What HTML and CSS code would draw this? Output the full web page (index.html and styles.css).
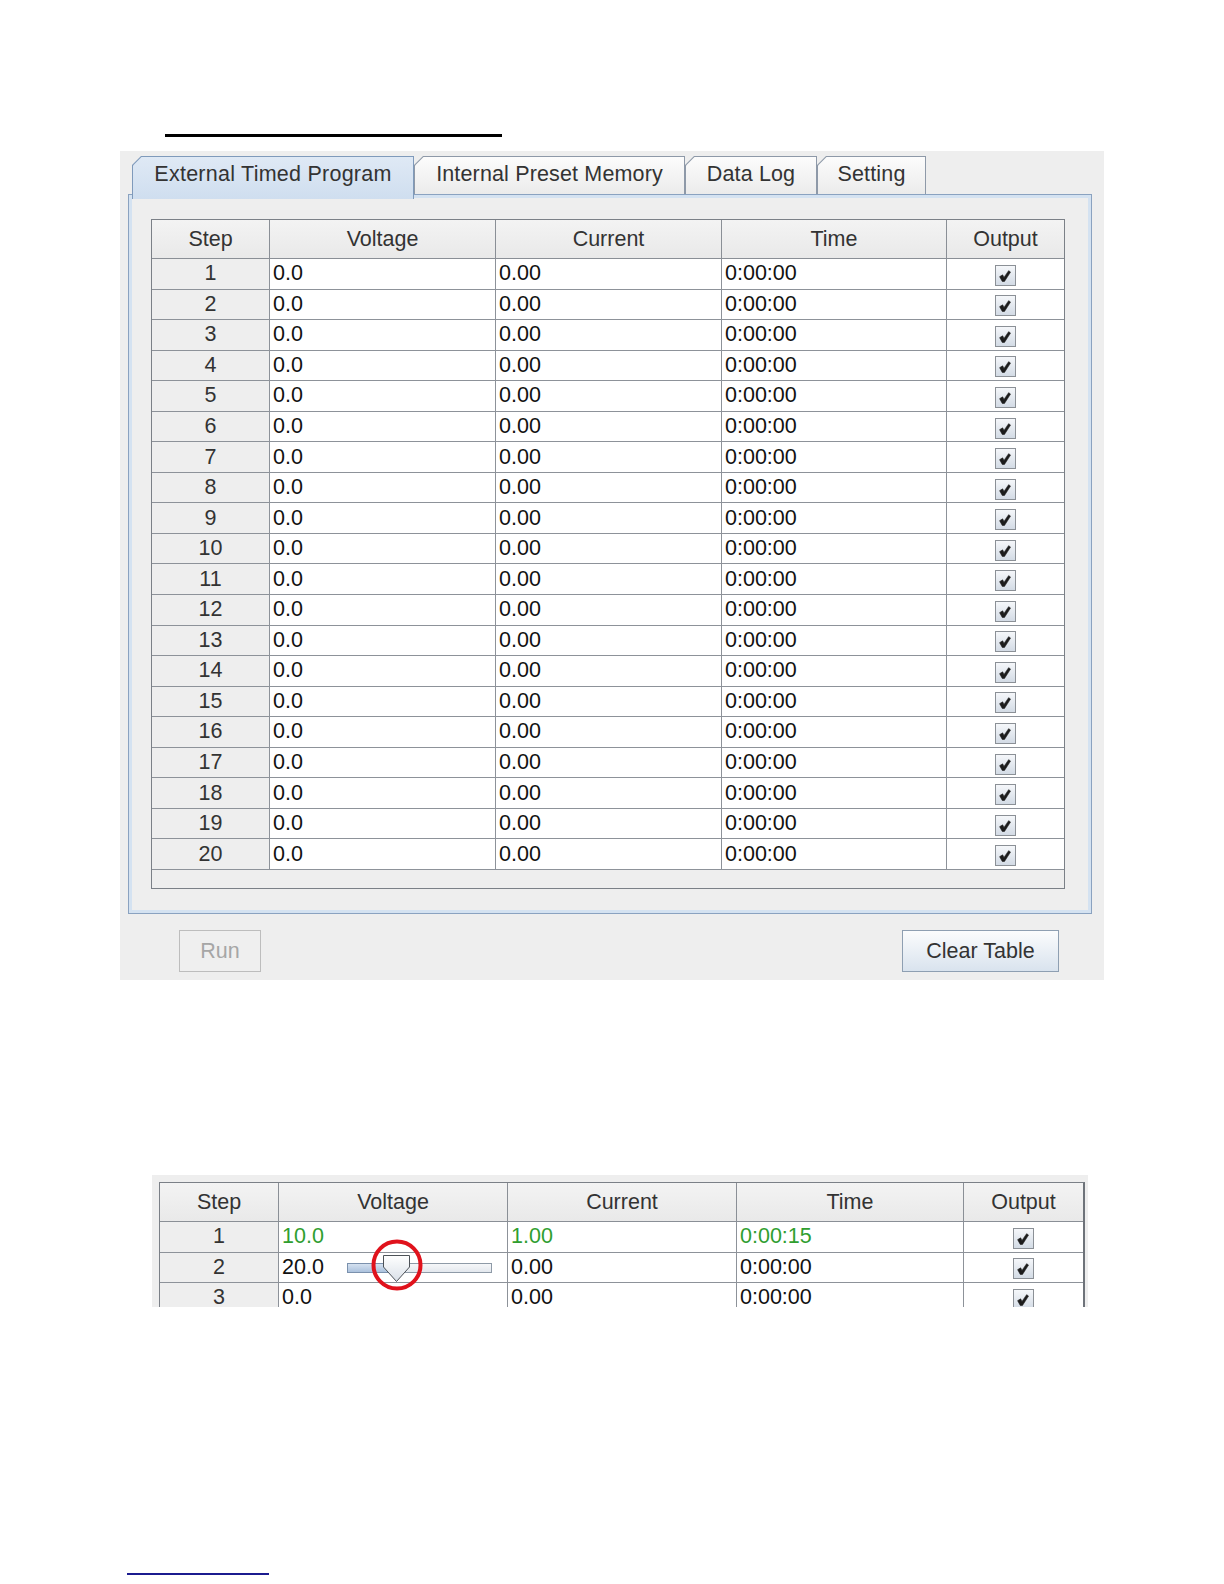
FILE: index.html
```html
<!DOCTYPE html>
<html>
<head>
<meta charset="utf-8">
<link rel="stylesheet" href="styles.css">
</head>
<body>
<div class="rule-top"></div>

<div class="window">
  <div class="tabs">
    <div class="tab sel t1"><div class="tab-in">External Timed Program</div></div>
    <div class="tab t2"><div class="tab-in">Internal Preset Memory</div></div>
    <div class="tab t3"><div class="tab-in">Data Log</div></div>
    <div class="tab t4"><div class="tab-in">Setting</div></div>
  </div>
  <div class="content">
    <div class="table">
      <div class="grid">
        <div class="hd">Step</div><div class="hd">Voltage</div><div class="hd">Current</div><div class="hd">Time</div><div class="hd last">Output</div>
        <div class="c s">1</div><div class="c">0.0</div><div class="c">0.00</div><div class="c">0:00:00</div><div class="c o"><span class="cb"><svg viewBox="0 0 20 20"><path d="M3.8 11.2L7 9.3L8.4 12L13.3 4.9L15.3 6.4L8.9 16.3L6.6 16.3Z"/></svg></span></div>
        <div class="c s">2</div><div class="c">0.0</div><div class="c">0.00</div><div class="c">0:00:00</div><div class="c o"><span class="cb"><svg viewBox="0 0 20 20"><path d="M3.8 11.2L7 9.3L8.4 12L13.3 4.9L15.3 6.4L8.9 16.3L6.6 16.3Z"/></svg></span></div>
        <div class="c s">3</div><div class="c">0.0</div><div class="c">0.00</div><div class="c">0:00:00</div><div class="c o"><span class="cb"><svg viewBox="0 0 20 20"><path d="M3.8 11.2L7 9.3L8.4 12L13.3 4.9L15.3 6.4L8.9 16.3L6.6 16.3Z"/></svg></span></div>
        <div class="c s">4</div><div class="c">0.0</div><div class="c">0.00</div><div class="c">0:00:00</div><div class="c o"><span class="cb"><svg viewBox="0 0 20 20"><path d="M3.8 11.2L7 9.3L8.4 12L13.3 4.9L15.3 6.4L8.9 16.3L6.6 16.3Z"/></svg></span></div>
        <div class="c s">5</div><div class="c">0.0</div><div class="c">0.00</div><div class="c">0:00:00</div><div class="c o"><span class="cb"><svg viewBox="0 0 20 20"><path d="M3.8 11.2L7 9.3L8.4 12L13.3 4.9L15.3 6.4L8.9 16.3L6.6 16.3Z"/></svg></span></div>
        <div class="c s">6</div><div class="c">0.0</div><div class="c">0.00</div><div class="c">0:00:00</div><div class="c o"><span class="cb"><svg viewBox="0 0 20 20"><path d="M3.8 11.2L7 9.3L8.4 12L13.3 4.9L15.3 6.4L8.9 16.3L6.6 16.3Z"/></svg></span></div>
        <div class="c s">7</div><div class="c">0.0</div><div class="c">0.00</div><div class="c">0:00:00</div><div class="c o"><span class="cb"><svg viewBox="0 0 20 20"><path d="M3.8 11.2L7 9.3L8.4 12L13.3 4.9L15.3 6.4L8.9 16.3L6.6 16.3Z"/></svg></span></div>
        <div class="c s">8</div><div class="c">0.0</div><div class="c">0.00</div><div class="c">0:00:00</div><div class="c o"><span class="cb"><svg viewBox="0 0 20 20"><path d="M3.8 11.2L7 9.3L8.4 12L13.3 4.9L15.3 6.4L8.9 16.3L6.6 16.3Z"/></svg></span></div>
        <div class="c s">9</div><div class="c">0.0</div><div class="c">0.00</div><div class="c">0:00:00</div><div class="c o"><span class="cb"><svg viewBox="0 0 20 20"><path d="M3.8 11.2L7 9.3L8.4 12L13.3 4.9L15.3 6.4L8.9 16.3L6.6 16.3Z"/></svg></span></div>
        <div class="c s">10</div><div class="c">0.0</div><div class="c">0.00</div><div class="c">0:00:00</div><div class="c o"><span class="cb"><svg viewBox="0 0 20 20"><path d="M3.8 11.2L7 9.3L8.4 12L13.3 4.9L15.3 6.4L8.9 16.3L6.6 16.3Z"/></svg></span></div>
        <div class="c s">11</div><div class="c">0.0</div><div class="c">0.00</div><div class="c">0:00:00</div><div class="c o"><span class="cb"><svg viewBox="0 0 20 20"><path d="M3.8 11.2L7 9.3L8.4 12L13.3 4.9L15.3 6.4L8.9 16.3L6.6 16.3Z"/></svg></span></div>
        <div class="c s">12</div><div class="c">0.0</div><div class="c">0.00</div><div class="c">0:00:00</div><div class="c o"><span class="cb"><svg viewBox="0 0 20 20"><path d="M3.8 11.2L7 9.3L8.4 12L13.3 4.9L15.3 6.4L8.9 16.3L6.6 16.3Z"/></svg></span></div>
        <div class="c s">13</div><div class="c">0.0</div><div class="c">0.00</div><div class="c">0:00:00</div><div class="c o"><span class="cb"><svg viewBox="0 0 20 20"><path d="M3.8 11.2L7 9.3L8.4 12L13.3 4.9L15.3 6.4L8.9 16.3L6.6 16.3Z"/></svg></span></div>
        <div class="c s">14</div><div class="c">0.0</div><div class="c">0.00</div><div class="c">0:00:00</div><div class="c o"><span class="cb"><svg viewBox="0 0 20 20"><path d="M3.8 11.2L7 9.3L8.4 12L13.3 4.9L15.3 6.4L8.9 16.3L6.6 16.3Z"/></svg></span></div>
        <div class="c s">15</div><div class="c">0.0</div><div class="c">0.00</div><div class="c">0:00:00</div><div class="c o"><span class="cb"><svg viewBox="0 0 20 20"><path d="M3.8 11.2L7 9.3L8.4 12L13.3 4.9L15.3 6.4L8.9 16.3L6.6 16.3Z"/></svg></span></div>
        <div class="c s">16</div><div class="c">0.0</div><div class="c">0.00</div><div class="c">0:00:00</div><div class="c o"><span class="cb"><svg viewBox="0 0 20 20"><path d="M3.8 11.2L7 9.3L8.4 12L13.3 4.9L15.3 6.4L8.9 16.3L6.6 16.3Z"/></svg></span></div>
        <div class="c s">17</div><div class="c">0.0</div><div class="c">0.00</div><div class="c">0:00:00</div><div class="c o"><span class="cb"><svg viewBox="0 0 20 20"><path d="M3.8 11.2L7 9.3L8.4 12L13.3 4.9L15.3 6.4L8.9 16.3L6.6 16.3Z"/></svg></span></div>
        <div class="c s">18</div><div class="c">0.0</div><div class="c">0.00</div><div class="c">0:00:00</div><div class="c o"><span class="cb"><svg viewBox="0 0 20 20"><path d="M3.8 11.2L7 9.3L8.4 12L13.3 4.9L15.3 6.4L8.9 16.3L6.6 16.3Z"/></svg></span></div>
        <div class="c s">19</div><div class="c">0.0</div><div class="c">0.00</div><div class="c">0:00:00</div><div class="c o"><span class="cb"><svg viewBox="0 0 20 20"><path d="M3.8 11.2L7 9.3L8.4 12L13.3 4.9L15.3 6.4L8.9 16.3L6.6 16.3Z"/></svg></span></div>
        <div class="c s">20</div><div class="c">0.0</div><div class="c">0.00</div><div class="c">0:00:00</div><div class="c o"><span class="cb"><svg viewBox="0 0 20 20"><path d="M3.8 11.2L7 9.3L8.4 12L13.3 4.9L15.3 6.4L8.9 16.3L6.6 16.3Z"/></svg></span></div>
      </div>
    </div>
  </div>
  <div class="actions">
    <div class="btn run">Run</div>
    <div class="btn clear">Clear Table</div>
  </div>
</div>

<div class="win2">
  <div class="table2">
    <div class="grid2">
      <div class="hd">Step</div><div class="hd">Voltage</div><div class="hd">Current</div><div class="hd">Time</div><div class="hd last">Output</div>
      <div class="c s">1</div><div class="c green">10.0</div><div class="c green">1.00</div><div class="c green">0:00:15</div><div class="c o"><span class="cb"><svg viewBox="0 0 20 20"><path d="M3.8 11.2L7 9.3L8.4 12L13.3 4.9L15.3 6.4L8.9 16.3L6.6 16.3Z"/></svg></span></div>
      <div class="c s">2</div><div class="c edit">20.0
        <svg class="slider" width="146" height="28" viewBox="0 0 146 28">
          <defs>
            <linearGradient id="fill" x1="0" y1="0" x2="0" y2="1"><stop offset="0" stop-color="#d7e3f1"/><stop offset="1" stop-color="#a9c0dc"/></linearGradient>
            <linearGradient id="rest" x1="0" y1="0" x2="0" y2="1"><stop offset="0" stop-color="#f7f8fa"/><stop offset="1" stop-color="#e2e7ed"/></linearGradient>
            <linearGradient id="thumb" x1="0" y1="0" x2="0" y2="1"><stop offset="0" stop-color="#ffffff"/><stop offset="1" stop-color="#d9e0e8"/></linearGradient>
          </defs>
          <rect x="0.5" y="8.5" width="144" height="9" fill="url(#rest)" stroke="#8e9aa7"/>
          <rect x="0.5" y="8.5" width="44" height="9" fill="url(#fill)" stroke="#7b91ad"/>
          <polygon points="36.5,0.5 62.5,0.5 62.5,12 49.5,26.5 36.5,12" fill="url(#thumb)" stroke="#4d5258"/>
          <circle cx="50" cy="10" r="23.5" fill="none" stroke="#e0121c" stroke-width="4"/>
        </svg>
      </div><div class="c">0.00</div><div class="c">0:00:00</div><div class="c o"><span class="cb"><svg viewBox="0 0 20 20"><path d="M3.8 11.2L7 9.3L8.4 12L13.3 4.9L15.3 6.4L8.9 16.3L6.6 16.3Z"/></svg></span></div>
      <div class="c s">3</div><div class="c">0.0</div><div class="c">0.00</div><div class="c">0:00:00</div><div class="c o"><span class="cb"><svg viewBox="0 0 20 20"><path d="M3.8 11.2L7 9.3L8.4 12L13.3 4.9L15.3 6.4L8.9 16.3L6.6 16.3Z"/></svg></span></div>
    </div>
  </div>
</div>

<div class="rule-bottom"></div>
</body>
</html>
```

FILE: styles.css
```css
html, body {
  margin: 0;
  padding: 0;
  background: #ffffff;
}

body {
  width: 1224px;
  height: 1584px;
  overflow: hidden;
  font-family: "Liberation Sans", Arial, sans-serif;
  font-size: 21.5px;
}

.rule-top {
  margin: 134px 0 0 165px;
  width: 337px;
  height: 3px;
  background: #000000;
}

.window {
  margin: 14px 0 0 120px;
  width: 984px;
  height: 829px;
  box-sizing: border-box;
  background: #eeeeee;
  padding: 5px 0 0 8px;
}

/* Tabs */
.tabs {
  display: flex;
  align-items: flex-end;
  height: 38px;
  padding-left: 4px;
}

.tab {
  height: 38px;
  box-sizing: border-box;
  padding: 1px 1px 0 1px;
  background: #8e99a8;
  clip-path: polygon(9px 0, 100% 0, 100% 100%, 0 100%, 0 9px);
}

.tab-in {
  height: 100%;
  box-sizing: border-box;
  clip-path: polygon(8.5px 0, 100% 0, 100% 100%, 0 100%, 0 8.5px);
  background: linear-gradient(#fcfcfc, #ebebeb);
  display: flex;
  align-items: center;
  justify-content: center;
  color: #333333;
  padding-bottom: 3px;
  white-space: nowrap;
  letter-spacing: 0.15px;
}

.tab.sel {
  height: 43px;
  margin-bottom: -5px;
  position: relative;
  z-index: 1;
  background: #7f9abb;
}

.tab.sel .tab-in {
  background: linear-gradient(#dfe9f5, #cfdeef);
  padding-bottom: 8px;
  letter-spacing: 0.25px;
}

.t1 { width: 282px; }
.t2 { width: 271px; }
.t3 { width: 132px; }
.t4 { width: 109px; }

.content {
  width: 964px;
  height: 720px;
  box-sizing: border-box;
  border: 1px solid #8aa2c0;
  box-shadow: inset 0 0 0 3px #d4e2f1;
  padding: 24px 0 0 22px;
}

/* Table */
.table {
  width: 914px;
  height: 670px;
  box-sizing: border-box;
  border: 1px solid #7b8087;
  background: #eeeeee;
}

.grid {
  display: grid;
  grid-template-columns: 118px 226px 226px 225px 117px;
  grid-template-rows: 39px repeat(20, 30.55px);
}

.hd {
  box-sizing: border-box;
  border-right: 1px solid #8a8f96;
  border-bottom: 1px solid #8a8f96;
  background: linear-gradient(#f3f3f3, #e9e9e9);
  color: #333333;
  display: flex;
  align-items: center;
  justify-content: center;
}

.hd.last,
.c.o {
  border-right: none;
}

.c {
  box-sizing: border-box;
  border-right: 1px solid #8d9299;
  border-bottom: 1px solid #8d9299;
  background: #ffffff;
  color: #111111;
  display: flex;
  align-items: center;
  padding-left: 3px;
  white-space: nowrap;
}

.c.s {
  background: #eeeeee;
  justify-content: center;
  padding-left: 0;
  color: #333333;
}

.c.o {
  justify-content: center;
  padding-left: 0;
}

.c.green {
  color: #2f9e2f;
}

.cb {
  width: 21px;
  height: 21px;
  box-sizing: border-box;
  border: 1px solid #8b9096;
  background: linear-gradient(#f5f7fa, #d3dbe5);
  margin-top: 3px;
  display: flex;
}

.cb svg {
  width: 19px;
  height: 19px;
}

.cb path {
  fill: #1c1c1c;
  stroke: #1c1c1c;
  stroke-width: 0.6;
  stroke-linejoin: round;
}

/* Buttons */
.actions {
  width: 964px;
  box-sizing: border-box;
  display: flex;
  justify-content: space-between;
  margin-top: 16px;
  padding: 0 33px 0 51px;
}

.btn {
  height: 42px;
  box-sizing: border-box;
  display: flex;
  align-items: center;
  justify-content: center;
}

.run {
  width: 82px;
  border: 1px solid #bdbdbd;
  background: #efefef;
  color: #a6a6a6;
}

.clear {
  width: 157px;
  border: 1px solid #8e9fb2;
  background: linear-gradient(#fbfcfd, #d9e3ee);
  color: #333333;
}

/* Second panel */
.win2 {
  margin: 195px 0 0 152px;
  width: 936px;
  height: 132px;
  box-sizing: border-box;
  background: #eeeeee;
  padding: 7px 0 0 7px;
  overflow: hidden;
}

.table2 {
  width: 926px;
  box-sizing: border-box;
  border-top: 1px solid #7b8087;
  border-left: 1px solid #7b8087;
  border-right: 2px solid #6e737a;
}

.grid2 {
  display: grid;
  grid-template-columns: 119px 229px 229px 227px 119px;
  grid-template-rows: 39px repeat(3, 30.6px);
}

.c.edit {
  position: relative;
  overflow: visible;
}

.slider {
  position: absolute;
  left: 68px;
  top: 2px;
  overflow: visible;
  z-index: 2;
}

.rule-bottom {
  margin: 266px 0 0 127px;
  width: 142px;
  height: 2px;
  background: #1b1b8f;
}
```
